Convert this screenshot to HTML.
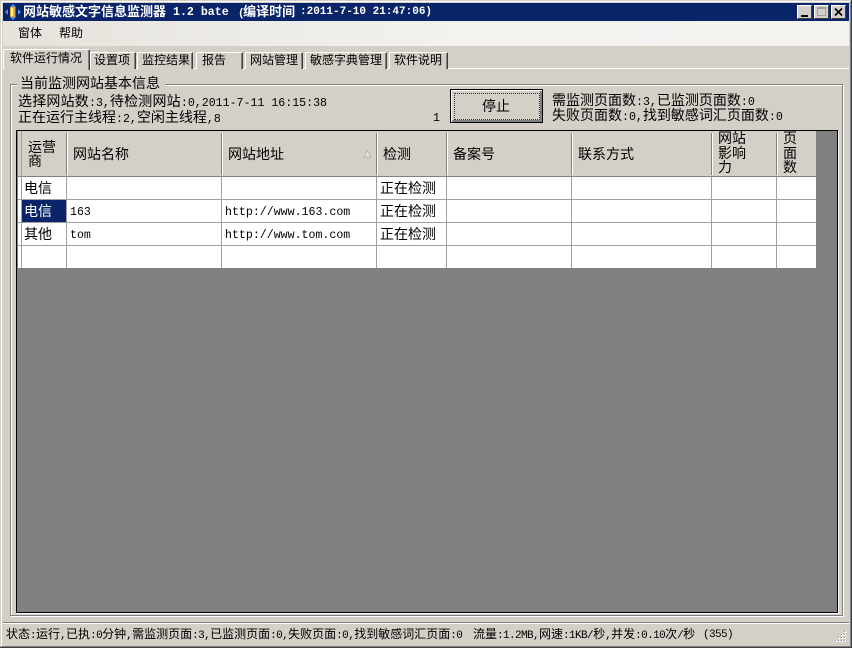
<!DOCTYPE html>
<html lang="zh">
<head>
<meta charset="utf-8">
<style>
html,body{margin:0;padding:0;background:#d4d0c8}
#w{position:relative;width:852px;height:648px;overflow:hidden;background:#d4d0c8;font-family:"Liberation Mono","WenQuanYi Zen Hei","Noto Sans CJK SC",monospace;color:#000}
#w div{position:absolute;box-sizing:border-box}
.t{white-space:nowrap;font-size:12px;line-height:14px}
.b{font-size:14px;line-height:16px}
.l{font-size:11px;letter-spacing:-.6px}
.c{display:inline-block;width:6px;font-size:11px;line-height:12px}
.m{font-size:11.6px;letter-spacing:0}
.s{letter-spacing:.2px}
.tab{background:#d4d0c8;border-top:1px solid #fff;border-left:1px solid #fff;border-right:1px solid #404040;box-shadow:inset -1px 0 0 #808080;height:17px;top:52px}
.h{background:#d4d0c8;top:131px;height:45px}
.v{width:1px;background:#a0a0a0;top:177px;height:91px}
.hv{width:1px;background:#fff;top:133px;height:42px}
.hs{width:1px;background:#808080;top:133px;height:42px}
.r{height:1px;background:#a0a0a0;left:21px;width:795px}
.wb{top:5px;height:14px;background:#d4d0c8;border:1px solid;border-color:#fff #404040 #404040 #fff}
</style>
</head>
<body>
<div id="w">
<div style="left:1px;top:1px;width:850px;height:1px;background:#fff"></div>
<div style="left:1px;top:1px;width:1px;height:645px;background:#fff"></div>
<div style="left:851px;top:0;width:1px;height:648px;background:#404040"></div>
<div style="left:850px;top:1px;width:1px;height:646px;background:#808080"></div>
<div style="left:0;top:647px;width:852px;height:1px;background:#404040"></div>
<div style="left:1px;top:646px;width:850px;height:1px;background:#808080"></div>

<div style="left:3px;top:3px;width:846px;height:18px;background:#0a246a"></div>
<svg style="position:absolute;left:5px;top:4px" width="16" height="16" viewBox="0 0 16 16"><path d="M8 0l3 3H5zM8 16l-3-3h6zM0 8l3-3v6zM16 8l-3 3V5z" fill="#4a90f0"/><rect x="5" y="3" width="6" height="10" fill="#e8b030"/><rect x="6" y="4" width="2" height="8" fill="#fff2a0"/><rect x="10" y="3" width="1" height="10" fill="#8a5a10"/></svg>
<div class="t" style="left:23px;top:5px;color:#fff;font-weight:bold;font-size:13px;line-height:15px">网站敏感文字信息监测器</div>
<div class="t" style="left:173px;top:5px;color:#fff;font-weight:bold;font-size:11.600px;line-height:15px">1.2 bate</div>
<div class="t" style="left:238px;top:5px;color:#fff;font-weight:bold;font-size:13px;line-height:15px"><span style="font-size:11px;letter-spacing:-1.500px">(</span>编译时间</div>
<div class="t" style="left:300px;top:5px;color:#fff;font-weight:bold;font-size:11px;line-height:15px">:2011-7-10 21:47:06)</div>
<div class="wb" style="left:797px;width:15px"><div style="left:3px;top:9px;width:7px;height:2px;background:#000"></div></div>
<div class="wb" style="left:814px;width:15px"><div style="left:2px;top:1px;width:9px;height:9px;border:1px solid #a0a0a0;border-top-width:2px"></div></div>
<div class="wb" style="left:831px;width:15px"><svg style="position:absolute;left:2px;top:2px" width="9" height="8"><path d="M1 0.500L8 7.500M8 0.500L1 7.500" stroke="#000" stroke-width="1.700" fill="none"/></svg></div>

<div style="left:3px;top:21px;width:846px;height:25px;background:linear-gradient(90deg,#e6e3dc,#f3f2ef 55%,#f4f3f0)"></div>
<div class="t" style="left:18px;top:27px">窗体</div>
<div class="t" style="left:59px;top:27px">帮助</div>

<div style="left:3px;top:68px;width:846px;height:1px;background:#fff"></div>
<div class="tab" style="left:90px;width:46px"></div>
<div class="tab" style="left:137px;width:56px"></div>
<div class="tab" style="left:196px;width:47px"></div>
<div class="tab" style="left:245px;width:58px"></div>
<div class="tab" style="left:305px;width:82px"></div>
<div class="tab" style="left:389px;width:59px"></div>
<div style="left:3px;top:49px;width:87px;height:21px;background:#d4d0c8;border-top:1px solid #fff;border-left:1px solid #fff;border-right:1px solid #404040;box-shadow:inset -1px 0 0 #808080;border-radius:2px 2px 0 0"></div>
<div class="t" style="left:10px;top:52px">软件运行情况</div>
<div class="t" style="left:94px;top:54px">设置项</div>
<div class="t" style="left:142px;top:54px">监控结果</div>
<div class="t" style="left:202px;top:54px">报告</div>
<div class="t" style="left:250px;top:54px">网站管理</div>
<div class="t" style="left:310px;top:54px">敏感字典管理</div>
<div class="t" style="left:394px;top:54px">软件说明</div>

<div style="left:10px;top:84px;width:833px;height:532px;border:1px solid #808080;box-shadow:1px 1px 0 #fff,inset 1px 1px 0 #fff"></div>
<div style="left:17px;top:80px;width:148px;height:10px;background:#d4d0c8"></div>
<div class="t b" style="left:20px;top:77px">当前监测网站基本信息</div>
<div class="t b" style="left:18px;top:95px"><span class="s">选择网站数</span><span class="m">:3,</span><span class="s">待检测网站</span><span class="m">:0,2011-7-11 16:15:38</span></div>
<div class="t b" style="left:18px;top:111px">正在运行主线程<span class="m">:2,</span>空闲主线程<span class="m">,8</span></div>
<div class="t m" style="left:433px;top:112px">1</div>

<div style="left:450px;top:89px;width:93px;height:34px;background:#d4d0c8;border:1px solid #000;box-shadow:inset 1px 1px 0 #fff,inset -1px -1px 0 #808080,inset -2px -2px 0 #808080"></div>
<div style="left:454px;top:93px;width:86px;height:27px;border:1px dotted #333"></div>
<div class="t b" style="left:482px;top:100px">停止</div>

<div class="t b" style="left:552px;top:94px">需监测页面数<span class="m">:3,</span>已监测页面数<span class="m">:0</span></div>
<div class="t b" style="left:552px;top:109px">失败页面数<span class="m">:0,</span>找到敏感词汇页面数<span class="m">:0</span></div>

<div style="left:16px;top:130px;width:822px;height:483px;background:#808080;border:1px solid #000;box-shadow:1px 1px 0 #fff"></div>
<div style="left:18px;top:131px;width:3px;height:45px;background:#d4d0c8"></div>
<div style="left:18px;top:177px;width:3px;height:91px;background:#fff"></div>
<div style="left:21px;top:177px;width:795px;height:91px;background:#fff"></div>
<div class="h" style="left:21px;width:795px"></div>
<div style="left:18px;top:176px;width:798px;height:1px;background:#808080"></div>
<div class="r" style="top:199px;left:18px;width:798px"></div>
<div class="r" style="top:222px;left:18px;width:798px"></div>
<div class="r" style="top:245px;left:18px;width:798px"></div>
<div style="left:21px;top:131px;width:1px;height:137px;background:#a0a0a0"></div>

<div class="hs" style="left:66px"></div><div class="hv" style="left:67px"></div>
<div class="hs" style="left:221px"></div><div class="hv" style="left:222px"></div>
<div class="hs" style="left:376px"></div><div class="hv" style="left:377px"></div>
<div class="hs" style="left:446px"></div><div class="hv" style="left:447px"></div>
<div class="hs" style="left:571px"></div><div class="hv" style="left:572px"></div>
<div class="hs" style="left:711px"></div><div class="hv" style="left:712px"></div>
<div class="hs" style="left:776px"></div><div class="hv" style="left:777px"></div>
<div class="v" style="left:66px"></div>
<div class="v" style="left:221px"></div>
<div class="v" style="left:376px"></div>
<div class="v" style="left:446px"></div>
<div class="v" style="left:571px"></div>
<div class="v" style="left:711px"></div>
<div class="v" style="left:776px"></div>

<div class="t b" style="left:28px;top:142px;width:30px;white-space:normal;line-height:14px">运营商</div>
<div class="t b" style="left:73px;top:148px">网站名称</div>
<div class="t b" style="left:228px;top:148px">网站地址</div>
<svg style="position:absolute;left:363px;top:150px" width="9" height="8"><path d="M4.500 1L1 7h7z" fill="#e8e6e0" stroke="#a8a49c" stroke-width=".7"/></svg>
<div class="t b" style="left:383px;top:148px">检测</div>
<div class="t b" style="left:453px;top:148px">备案号</div>
<div class="t b" style="left:578px;top:148px">联系方式</div>
<div class="t b" style="left:718px;top:133px;width:30px;white-space:normal;line-height:14.500px">网站影响力</div>
<div class="t b" style="left:783px;top:133px;width:15px;white-space:normal;line-height:14.500px">页面数</div>

<div style="left:22px;top:200px;width:44px;height:22px;background:#0a246a"></div>
<div class="t b" style="left:24px;top:182px">电信</div>
<div class="t b" style="left:24px;top:205px;color:#fff">电信</div>
<div class="t b" style="left:24px;top:228px">其他</div>
<div class="t m" style="left:70px;top:206px">163</div>
<div class="t m" style="left:70px;top:229px">tom</div>
<div class="t m" style="left:225px;top:206px">http://www.163.com</div>
<div class="t m" style="left:225px;top:229px">http://www.tom.com</div>
<div class="t b" style="left:380px;top:182px">正在检测</div>
<div class="t b" style="left:380px;top:205px">正在检测</div>
<div class="t b" style="left:380px;top:228px">正在检测</div>

<div style="left:3px;top:622px;width:846px;height:1px;background:#808080"></div>
<div style="left:3px;top:623px;width:846px;height:1px;background:#fff"></div>
<div class="t" style="left:6px;top:628px">状态<span class="l">:</span>运行<span class="c">,</span>已执<span class="l">:0</span>分钟<span class="c">,</span>需监测页面<span class="l">:3</span><span class="c">,</span>已监测页面<span class="l">:0</span><span class="c">,</span>失败页面<span class="l">:0</span><span class="c">,</span>找到敏感词汇页面<span class="l">:0</span></div>
<div class="t" style="left:473px;top:628px">流量<span class="l">:1.2MB</span><span class="c">,</span>网速<span class="l">:1KB/</span>秒<span class="c">,</span>并发<span class="l">:0.10</span>次<span class="l">/</span>秒</div>
<div class="t l" style="left:703px;top:628px;letter-spacing:-.6px">(355)</div>
<svg style="position:absolute;left:835px;top:631px" width="12" height="12"><path d="M9 0h2v2H9zM6 3h2v2H6zM9 3h2v2H9zM3 6h2v2H3zM6 6h2v2H6zM9 6h2v2H9zM0 9h2v2H0zM3 9h2v2H3zM6 9h2v2H6zM9 9h2v2H9z" fill="#fff"/><path d="M9 0h1v1H9zM6 3h1v1H6zM9 3h1v1H9zM3 6h1v1H3zM6 6h1v1H6zM9 6h1v1H9zM0 9h1v1H0zM3 9h1v1H3zM6 9h1v1H6zM9 9h1v1H9z" fill="#808080"/></svg>
</div>
</body>
</html>
